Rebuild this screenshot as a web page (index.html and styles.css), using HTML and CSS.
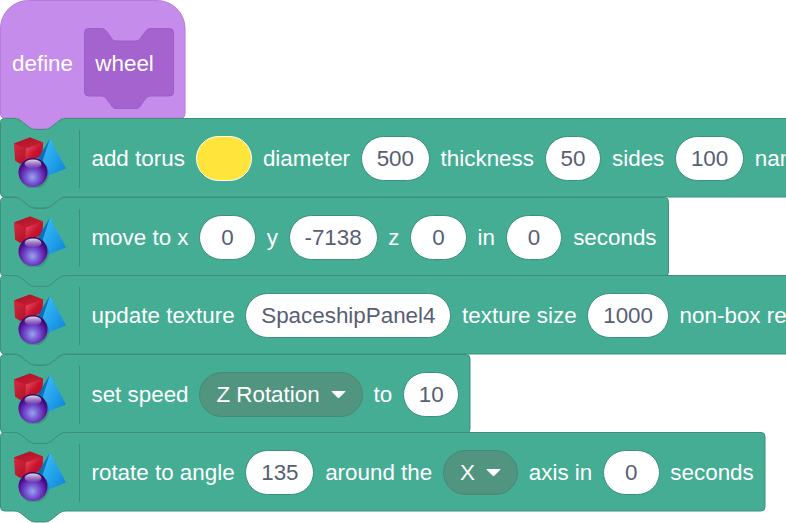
FILE: index.html
```html
<!DOCTYPE html>
<html lang="en">
<head>
<meta charset="utf-8">
<title>wheel</title>
<link rel="stylesheet" href="styles.css">
</head>
<body>
<svg class="defs" width="0" height="0" aria-hidden="true">
  <defs>
    <linearGradient id="cubeFront" x1="0" y1="0" x2="1" y2="1"><stop offset="0" stop-color="#e02c44"/><stop offset="1" stop-color="#98081c"/></linearGradient>
    <linearGradient id="cubeTop" x1="0" y1="0" x2="1" y2="1"><stop offset="0" stop-color="#a80f25"/><stop offset="1" stop-color="#cf2238"/></linearGradient>
    <linearGradient id="cubeSide" x1="0" y1="0" x2="1" y2="1"><stop offset="0" stop-color="#f0606f"/><stop offset=".5" stop-color="#c9142f"/><stop offset="1" stop-color="#a60d22"/></linearGradient>
    <linearGradient id="pyrA" x1="0" y1="0" x2="1" y2="1"><stop offset="0" stop-color="#0a5fa6"/><stop offset="1" stop-color="#1587d4"/></linearGradient>
    <linearGradient id="pyrB" x1="0" y1="0" x2="1" y2="1"><stop offset="0" stop-color="#3cc0f8"/><stop offset="1" stop-color="#0b83dc"/></linearGradient>
    <radialGradient id="ball" cx=".48" cy=".66" r=".6"><stop offset="0" stop-color="#98a4ee"/><stop offset=".4" stop-color="#7452d0"/><stop offset=".8" stop-color="#560f96"/><stop offset="1" stop-color="#36086a"/></radialGradient>
    <linearGradient id="shine" x1="0" y1="0" x2="0" y2="1"><stop offset="0" stop-color="#fff" stop-opacity=".85"/><stop offset="1" stop-color="#fff" stop-opacity="0"/></linearGradient>
    <g id="shapes">
      <path d="M4 13.500 L20 7.500 L33 12.500 L32 25.500 L10 34 L5 30.500Z" fill="url(#cubeFront)"/>
      <path d="M4 13.500 L20 7.500 L33 12.500 L16 18.500Z" fill="url(#cubeTop)"/>
      <path d="M16 18.500 L33 12.500 L32 25.500 L15 34Z" fill="url(#cubeSide)"/>
      <path d="M40 8.500 L28 28.500 L36 46.500Z" fill="url(#pyrA)"/>
      <path d="M40 8.500 L56 38.500 L36 46.500 L33 30Z" fill="url(#pyrB)"/>
      <circle cx="24" cy="44" r="15" fill="#2a6a5a" opacity=".3"/>
      <circle cx="23" cy="42.500" r="14.500" fill="url(#ball)"/>
      <ellipse cx="23" cy="34" rx="8.500" ry="4.500" fill="url(#shine)"/>
    </g>
  </defs>
</svg>
<main class="stack">
  <div class="block hat">
    <svg class="shape" width="200" height="130"><path class="hat-shape" d="M.5 28 a28 28 0 0 1 28-27.5 H157 a28 28 0 0 1 28 27.5 V114 a4 4 0 0 1-4 4 H66 c-4 0-6 1.500-9 4 l-5 4 c-3 2.500-5 3-8 3 H36 c-3 0-5-.5-8-3 l-5-4 c-3-2.500-5-4-9-4 H4.500 a4 4 0 0 1-4-4 z"/></svg>
    <div class="hat-row">
      <span class="label">define</span>
      <span class="proto">
        <svg class="proto-shape" width="93" height="84"><path d="M1.500 5.500 a4 4 0 0 1 4-4 H18 c3 0 4 1 6 3.500 l3 4 c2 3 3 5 6 5 H53 c3 0 4-2 6-5 l3-4 c2-2.500 3-3.500 6-3.500 H86.500 a4 4 0 0 1 4 4 V65 a4 4 0 0 1-4 4 H68 c-3 0-4 1-6 3.500 l-3 4 c-2 3-3 5-6 5 H33 c-3 0-4-2-6-5 l-3-4 c-2-2.500-3-3.500-6-3.500 H5.500 a4 4 0 0 1-4-4 z"/></svg>
        <span class="label proto-label">wheel</span>
      </span>
    </div>
  </div>

  <div class="block">
    <svg class="shape" width="900" height="92"><path d="M.5 4.500 a4 4 0 0 1 4-4 H14 c4 0 6 1.500 9 4 l5 4 c3 2.500 5 3 8 3 H44 c3 0 5-.5 8-3 l5-4 c3-2.500 5-4 9-4 H895.500 a4 4 0 0 1 4 4 V75 a4 4 0 0 1-4 4 H66 c-4 0-6 1.500-9 4 l-5 4 c-3 2.500-5 3-8 3 H36 c-3 0-5-.5-8-3 l-5-4 c-3-2.500-5-4-9-4 H4.500 a4 4 0 0 1-4-4 z"/></svg>
    <div class="row">
      <svg class="icon" width="56" height="58" viewBox="0 0 56 58"><use href="#shapes"/></svg>
      <span class="divider"></span>
      <span class="label">add torus</span>
      <span class="swatch"></span>
      <span class="label">diameter</span>
      <span class="field">500</span>
      <span class="label">thickness</span>
      <span class="field">50</span>
      <span class="label">sides</span>
      <span class="field">100</span>
      <span class="label">name</span>
    </div>
  </div>

  <div class="block">
    <svg class="shape" width="670" height="92"><path d="M.5 4.500 a4 4 0 0 1 4-4 H14 c4 0 6 1.500 9 4 l5 4 c3 2.500 5 3 8 3 H44 c3 0 5-.5 8-3 l5-4 c3-2.500 5-4 9-4 H664.500 a4 4 0 0 1 4 4 V75 a4 4 0 0 1-4 4 H66 c-4 0-6 1.500-9 4 l-5 4 c-3 2.500-5 3-8 3 H36 c-3 0-5-.5-8-3 l-5-4 c-3-2.500-5-4-9-4 H4.500 a4 4 0 0 1-4-4 z"/></svg>
    <div class="row">
      <svg class="icon" width="56" height="58" viewBox="0 0 56 58"><use href="#shapes"/></svg>
      <span class="divider"></span>
      <span class="label">move to x</span>
      <span class="field">0</span>
      <span class="label">y</span>
      <span class="field">-7138</span>
      <span class="label">z</span>
      <span class="field">0</span>
      <span class="label">in</span>
      <span class="field">0</span>
      <span class="label">seconds</span>
    </div>
  </div>

  <div class="block">
    <svg class="shape" width="900" height="92"><path d="M.5 4.500 a4 4 0 0 1 4-4 H14 c4 0 6 1.500 9 4 l5 4 c3 2.500 5 3 8 3 H44 c3 0 5-.5 8-3 l5-4 c3-2.500 5-4 9-4 H895.500 a4 4 0 0 1 4 4 V75 a4 4 0 0 1-4 4 H66 c-4 0-6 1.500-9 4 l-5 4 c-3 2.500-5 3-8 3 H36 c-3 0-5-.5-8-3 l-5-4 c-3-2.500-5-4-9-4 H4.500 a4 4 0 0 1-4-4 z"/></svg>
    <div class="row">
      <svg class="icon" width="56" height="58" viewBox="0 0 56 58"><use href="#shapes"/></svg>
      <span class="divider"></span>
      <span class="label">update texture</span>
      <span class="field">SpaceshipPanel4</span>
      <span class="label">texture size</span>
      <span class="field">1000</span>
      <span class="label">non-box repeat</span>
    </div>
  </div>

  <div class="block">
    <svg class="shape" width="472" height="92"><path d="M.5 4.500 a4 4 0 0 1 4-4 H14 c4 0 6 1.500 9 4 l5 4 c3 2.500 5 3 8 3 H44 c3 0 5-.5 8-3 l5-4 c3-2.500 5-4 9-4 H466 a4 4 0 0 1 4 4 V75 a4 4 0 0 1-4 4 H66 c-4 0-6 1.500-9 4 l-5 4 c-3 2.500-5 3-8 3 H36 c-3 0-5-.5-8-3 l-5-4 c-3-2.500-5-4-9-4 H4.500 a4 4 0 0 1-4-4 z"/></svg>
    <div class="row">
      <svg class="icon" width="56" height="58" viewBox="0 0 56 58"><use href="#shapes"/></svg>
      <span class="divider"></span>
      <span class="label">set speed</span>
      <span class="menu">Z Rotation<svg class="caret" width="15" height="9" viewBox="0 0 15 9"><path d="M1 1.500 H14 L7.500 8Z"/></svg></span>
      <span class="label">to</span>
      <span class="field">10</span>
    </div>
  </div>

  <div class="block">
    <svg class="shape" width="767" height="92"><path d="M.5 4.500 a4 4 0 0 1 4-4 H14 c4 0 6 1.500 9 4 l5 4 c3 2.500 5 3 8 3 H44 c3 0 5-.5 8-3 l5-4 c3-2.500 5-4 9-4 H761 a4 4 0 0 1 4 4 V75 a4 4 0 0 1-4 4 H66 c-4 0-6 1.500-9 4 l-5 4 c-3 2.500-5 3-8 3 H36 c-3 0-5-.5-8-3 l-5-4 c-3-2.500-5-4-9-4 H4.500 a4 4 0 0 1-4-4 z"/></svg>
    <div class="row">
      <svg class="icon" width="56" height="58" viewBox="0 0 56 58"><use href="#shapes"/></svg>
      <span class="divider"></span>
      <span class="label">rotate to angle</span>
      <span class="field">135</span>
      <span class="label">around the</span>
      <span class="menu">X<svg class="caret" width="15" height="9" viewBox="0 0 15 9"><path d="M1 1.500 H14 L7.500 8Z"/></svg></span>
      <span class="label">axis in</span>
      <span class="field">0</span>
      <span class="label">seconds</span>
    </div>
  </div>
</main>
</body>
</html>
```
FILE: styles.css
```css
html, body {
  margin: 0;
  height: 100%;
  overflow: hidden;
  background: #fff;
}
.defs { position: absolute; }
.stack {
  display: flex;
  flex-direction: column;
  font-family: "Liberation Sans", Arial, sans-serif;
  font-size: 22.4px;
}
.block {
  position: relative;
  flex: none;
  height: 78px;
}
.block:nth-child(even) { height: 79px; }
.hat { height: 118px; }
.shape {
  position: absolute;
  left: 0;
  top: 0;
  overflow: visible;
}
.shape path {
  fill: #44ad94;
  stroke: #3b8f7b;
  stroke-width: 1;
}
.shape .hat-shape {
  fill: #c68cec;
  stroke: #b57dd9;
}
.hat-row, .row {
  position: relative;
  display: flex;
  align-items: center;
  gap: 10.8px;
  white-space: nowrap;
}
.hat-row {
  height: 128px;
  padding-left: 12px;
}
.row {
  height: 81px;
  padding-left: 10px;
}
.label { color: #fff; }
.proto {
  position: relative;
  display: flex;
  align-items: center;
  width: 90px;
  height: 80px;
}
.proto-shape {
  position: absolute;
  left: -1px;
  top: 2.5px;
}
.proto-shape path {
  fill: #a463cf;
  stroke: #9d5cc8;
}
.proto-label {
  position: relative;
  padding-left: 11.5px;
}
.icon { flex: none; margin-right: 2.2px; }
.divider {
  flex: none;
  width: 1px;
  height: 58px;
  margin-right: .7px;
  background: #3b8f7b;
}
.swatch {
  flex: none;
  box-sizing: border-box;
  width: 56.5px;
  height: 45px;
  border: 1px solid #fff;
  border-radius: 23px;
  background: #ffe53b;
}
.field {
  flex: none;
  box-sizing: border-box;
  min-width: 56.5px;
  height: 45px;
  padding: 0 14.8px;
  line-height: 43px;
  text-align: center;
  color: #575e75;
  background: #fff;
  border: 1px solid #3b8f7b;
  border-radius: 23px;
}
.menu {
  flex: none;
  display: flex;
  align-items: center;
  gap: 11px;
  box-sizing: border-box;
  height: 45px;
  padding: 0 16px;
  color: #fff;
  background: #51947f;
  border: 1px solid #458a76;
  border-radius: 23px;
}
.caret { flex: none; }
.caret path {
  fill: #fff;
  stroke: #fff;
  stroke-width: 1;
  stroke-linejoin: round;
}
```
